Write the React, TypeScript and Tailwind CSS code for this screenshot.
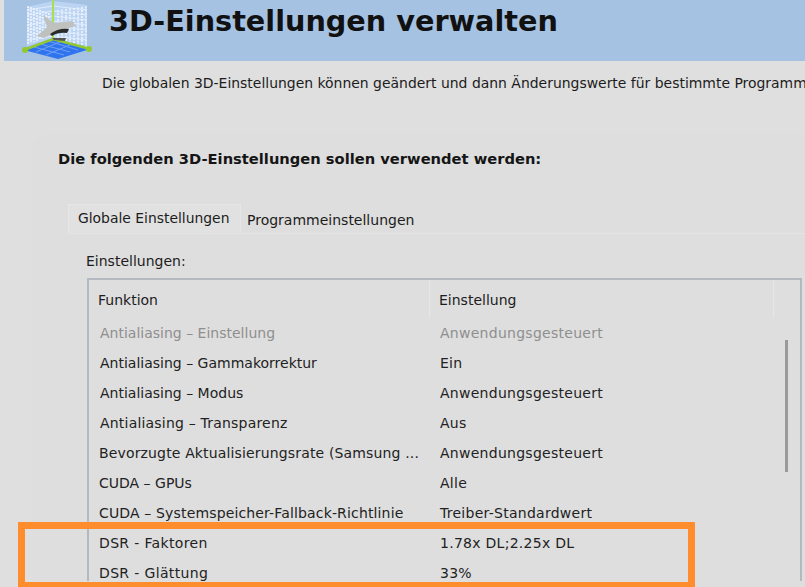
import React from 'react';

const rows = [
  { name: 'Antialiasing – Einstellung', value: 'Anwendungsgesteuert', disabled: true, nameClass: 'pl-[11px]' },
  { name: 'Antialiasing – Gammakorrektur', value: 'Ein', nameClass: 'pl-[11px]' },
  { name: 'Antialiasing – Modus', value: 'Anwendungsgesteuert', nameClass: 'pl-[11px]' },
  { name: 'Antialiasing – Transparenz', value: 'Aus', nameClass: 'pl-[11px] tracking-[0.2px]' },
  { name: 'Bevorzugte Aktualisierungsrate (Samsung ...', value: 'Anwendungsgesteuert', nameClass: 'pl-[10px] tracking-[0.15px]' },
  { name: 'CUDA – GPUs', value: 'Alle', nameClass: 'pl-[10px]' },
  { name: 'CUDA – Systemspeicher-Fallback-Richtlinie', value: 'Treiber-Standardwert', nameClass: 'pl-[10px] tracking-[0.15px]' },
  { name: 'DSR - Faktoren', value: '1.78x DL;2.25x DL', nameClass: 'pl-[10px] tracking-[0.35px]' },
  { name: 'DSR - Glättung', value: '33%', nameClass: 'pl-[10px] tracking-[0.35px]' },
];

const CubeIcon = () => {
  const grid = [];
  for (let i = 0; i < 8; i++) {
    grid.push(<path key={`a${i}`} d={`M${28 + i * 3} ${6 + i} V${44 - i}`} stroke="#ffffff" strokeWidth="1.2" strokeDasharray="2 1" />);
    grid.push(<path key={`b${i}`} d={`M${58 + i * 4} ${10 - i * 0.5} V${40 + i}`} stroke="#ffffff" strokeWidth="1.2" strokeDasharray="2 1" />);
  }
  for (let i = 0; i < 7; i++) {
    grid.push(<path key={`c${i}`} d={`M27 ${10 + i * 5} L53 ${6 + i * 5} L87 ${10 + i * 5}`} stroke="#e9f1fd" strokeWidth="0.8" fill="none" />);
  }
  return (
    <svg width="72" height="60" viewBox="22 0 72 60" className="block">
      <path d="M27 7 L53 1 L87 5 L87 46 L53 38 L27 46 Z" fill="#bcd4f4" />
      {grid}
      <path d="M53 39 L90 49 L58 59 L24 50 Z" fill="#2f74ee" />
      <path d="M40 44 L70 52 M48 41 L78 50 M34 47 L64 55 M62 41 L36 52 M72 44 L46 55" stroke="#6fa0f2" strokeWidth="1" />
      <path d="M53 0 V39" stroke="#a8e04a" strokeWidth="2" />
      <path d="M24 50 L53 39 L90 49" stroke="#93c92e" strokeWidth="2.5" fill="none" />
      <circle cx="25" cy="50" r="3" fill="#93c92e" />
      <circle cx="89" cy="49" r="3" fill="#93c92e" />
      <path d="M43 15 L54 23 L72 21 L76 26 L62 30 L44 38 L37 36 L47 27 Z" fill="#bfc1bf" />
      <path d="M50 34 Q58 28 69 29 L67 33 Q58 32 52 36 Z" fill="#2a2a2a" />
      <path d="M52 38 L66 38 L65 41 L54 40 Z" fill="#555" />
    </svg>
  );
};

export default function App() {
  return (
    <div className="relative w-[805px] h-[587px] overflow-hidden bg-[#dfdfdf] font-['DejaVu_Sans',sans-serif] text-[14px] text-[#1c1c1c]">
      <div className="ml-1 h-[61px] bg-[#a5c2e2] flex overflow-hidden">
        <div className="w-[105px] shrink-0 pl-[18px]">
          <CubeIcon />
        </div>
        <h1 className="font-bold text-[28.7px] leading-[42px] text-[#111]">
          3D-Einstellungen verwalten
        </h1>
      </div>

      <p className="ml-[102px] mt-[12px] h-[20px] text-[13.95px] leading-[20px] whitespace-nowrap">
        Die globalen 3D-Einstellungen können geändert und dann Änderungswerte für bestimmte Programme
      </p>

      <div className="ml-[32px] mt-[41px] rounded-tl-2xl bg-[#dedede] pl-[26px] pt-[15px] h-[460px]">
        <div className="font-bold text-[14.7px] leading-[20px] text-[#151515] whitespace-nowrap">
          Die folgenden 3D-Einstellungen sollen verwendet werden:
        </div>

        <div className="mt-[35px] ml-[10px] flex items-end border-b border-[#e4e4e4]">
          <div className="w-[173px] h-[29px] pl-[9px] bg-[#e1e1e1] border border-b-0 border-[#e6e6e6] text-[13.9px] leading-[26px] whitespace-nowrap">
            Globale Einstellungen
          </div>
          <div className="w-[178px] h-[25px] pl-[6px] leading-[25px] whitespace-nowrap">
            Programmeinstellungen
          </div>
        </div>

        <div className="ml-[28px] mt-[17px] leading-[20px]">Einstellungen:</div>

        <div className="ml-[29px] mt-[7px] w-[715px] h-[303px] border-t-2 border-l-2 border-r-2 border-[#b4b9bf] flex">
          <div className="w-[685px]">
            <div className="flex h-[38px] leading-[40px] border-r border-[#e6e6e6]">
              <div className="w-[341px] pl-[9px] border-r border-[#e6e6e6]">Funktion</div>
              <div className="pl-[9px]">Einstellung</div>
            </div>
            <div>
              {rows.map((row) => (
                <div
                  key={row.name}
                  className={`flex h-[30px] leading-[30px] ${row.disabled ? 'text-[#8f8f8f]' : 'text-[#222]'}`}
                >
                  <div className={`w-[342px] whitespace-nowrap ${row.nameClass}`}>{row.name}</div>
                  <div className="pl-[9px] whitespace-nowrap tracking-[0.27px]">{row.value}</div>
                </div>
              ))}
            </div>
          </div>
          <div className="flex-1 pt-[60px] pl-[11px]">
            <div className="w-[3px] h-[132px] bg-[#9a9a9a]" />
          </div>
        </div>
      </div>

      <div className="absolute left-[18px] top-[522px] w-[677px] h-[65px] border-[7px] border-b-[5px] border-[#ff8c2d] pointer-events-none" />
    </div>
  );
}
